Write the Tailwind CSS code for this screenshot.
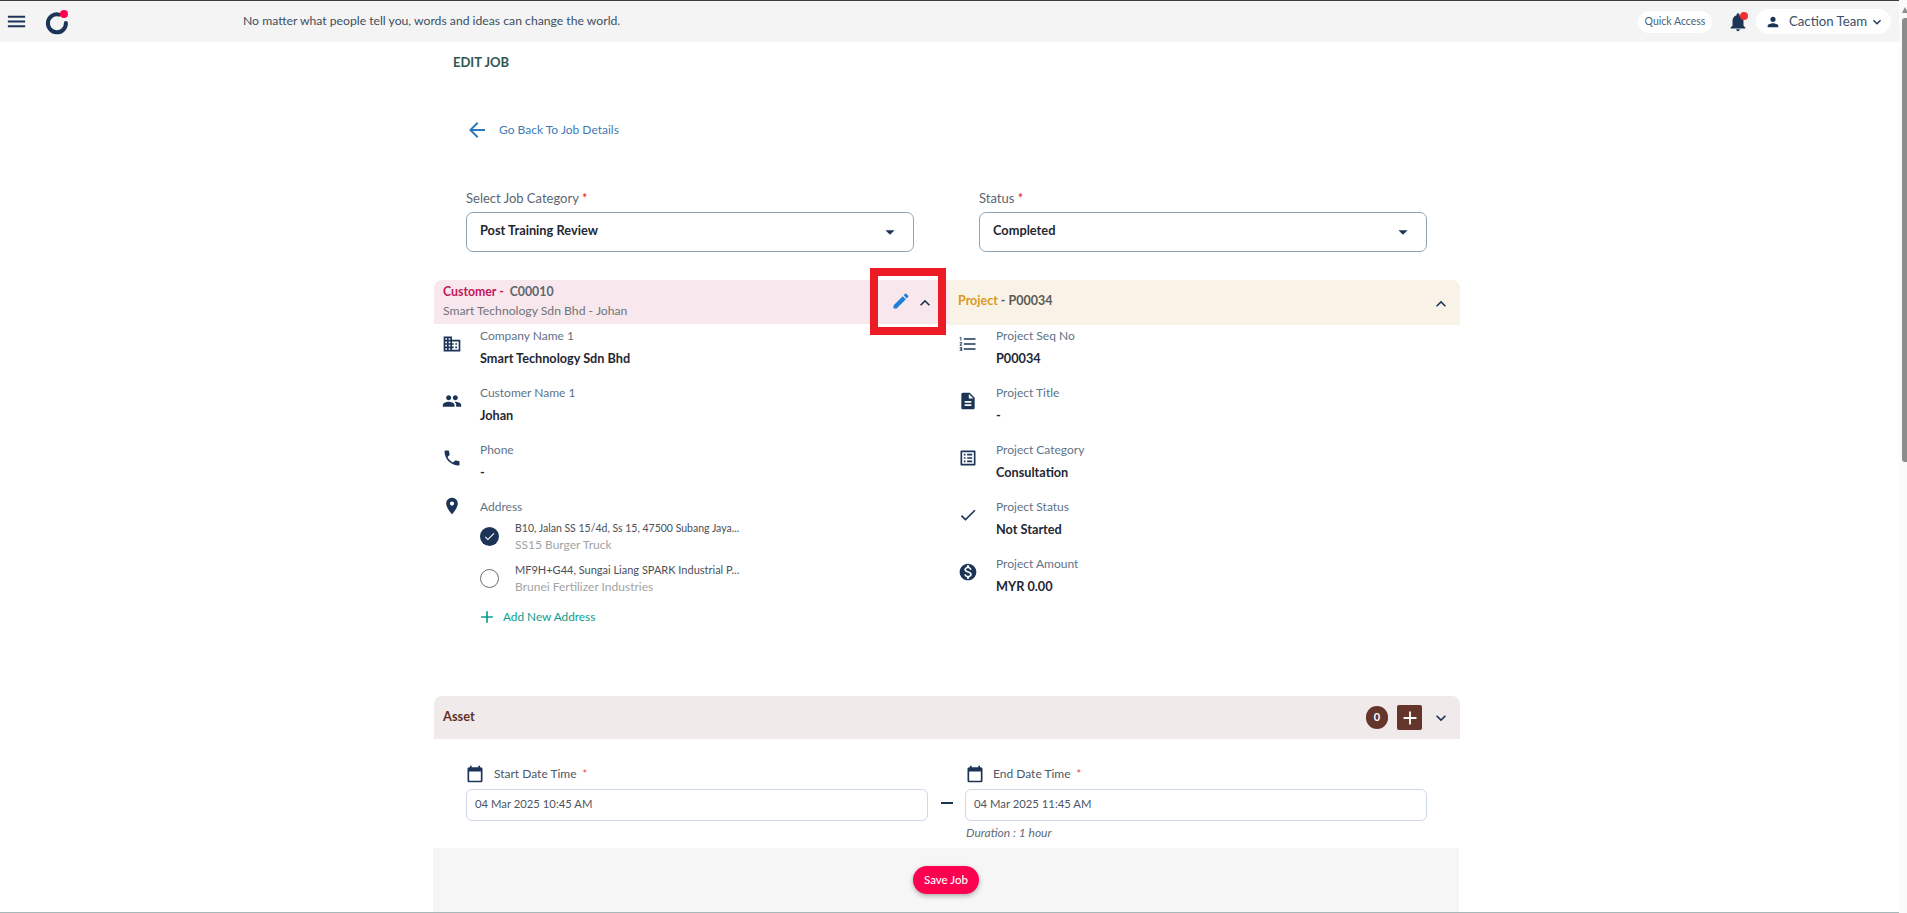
<!DOCTYPE html>
<html>
<head>
<meta charset="utf-8">
<script src="https://cdn.jsdelivr.net/npm/@tailwindcss/browser@4"></script>
</head>
<body class="m-0 bg-white font-['Lato',sans-serif] overflow-hidden">
<div class="relative flex h-[913px] w-[1907px] overflow-hidden">
  <div class="flex h-full w-[1899px] flex-col">
    <!-- top bar -->
    <header class="flex h-[42px] shrink-0 items-center border-t border-t-[#3f3a3c] bg-[#f4f4f4]">
      <svg class="ml-[5px] h-[23px] w-[23px] fill-[#1c3557]" viewBox="0 0 24 24"><path d="M3 18h18v-2H3v2zm0-5h18v-2H3v2zm0-7v2h18V6H3z"/></svg>
      <svg class="ml-[16px] h-[26px] w-[26px]" viewBox="0 0 26 26"><path d="M15 5.6A9 9 0 1 0 21.9 14" fill="none" stroke="#1c3557" stroke-width="4" stroke-linecap="round"/><circle cx="20" cy="5" r="4" fill="#ff0050"/></svg>
      <p class="ml-[173px] text-[12.2px] text-[#3d4f60]">No matter what people tell you, words and ideas can change the world.</p>
      <div class="ml-auto flex items-center">
        <span class="flex h-[22px] w-[74px] items-center justify-center rounded-full bg-white text-[10.5px] text-[#4a6178]">Quick Access</span>
        <span class="relative ml-[15px] block h-[22px] w-[22px]">
          <svg class="h-[22px] w-[22px] fill-[#1c3557]" viewBox="0 0 24 24"><path d="M12 22c1.1 0 2-.9 2-2h-4c0 1.1.89 2 2 2zm6-6v-5c0-3.07-1.64-5.64-4.5-6.32V4c0-.83-.67-1.5-1.5-1.5s-1.5.67-1.5 1.5v.68C7.63 5.36 6 7.92 6 11v5l-2 2v1h16v-1l-2-2z"/></svg>
          <span class="absolute right-[1px] top-[1px] h-[8px] w-[8px] rounded-full bg-[#f03030]"></span>
        </span>
        <div class="ml-[7px] mr-[8px] flex h-[25px] w-[135px] items-center rounded-full bg-white">
          <svg class="ml-[9px] h-[16px] w-[16px] fill-[#1c3557]" viewBox="0 0 24 24"><path d="M12 12c2.21 0 4-1.79 4-4s-1.79-4-4-4-4 1.79-4 4 1.79 4 4 4zm0 2c-2.67 0-8 1.34-8 4v2h16v-2c0-2.66-5.33-4-8-4z"/></svg>
          <span class="ml-[8px] w-[74px] whitespace-nowrap text-[13.2px] text-[#3d5166]">Caction Team</span>
          <svg class="ml-[6px] h-[16px] w-[16px] fill-[#1c3557]" viewBox="0 0 24 24"><path d="M16.59 8.59L12 13.17 7.41 8.59 6 10l6 6 6-6z"/></svg>
        </div>
      </div>
    </header>

    <main class="ml-[434px] flex w-[1027px] flex-1 flex-col">
      <h1 class="flex h-[42px] items-center pl-[19px] text-[13px] font-bold text-[#2f574f]">EDIT JOB</h1>
      <div class="mt-[30px] flex h-[32px] items-center pl-[31px]">
        <svg class="h-[24px] w-[24px] fill-[#2f78b7]" viewBox="0 0 24 24"><path d="M20 11H7.83l5.59-5.59L12 4l-8 8 8 8 1.41-1.41L7.83 13H20v-2z"/></svg>
        <span class="ml-[10px] text-[12px] text-[#3f7cb5]">Go Back To Job Details</span>
      </div>

      <div class="mt-[40px] grid grid-cols-[448px_448px] gap-x-[65px] pl-[32px]">
        <div>
          <label class="flex h-[24px] items-center pt-[2px] text-[13px] text-[#5a6672]">Select Job Category&nbsp;<span class="text-[#e01b24]">*</span></label>
          <div class="mt-[2px] flex h-[40px] items-center justify-between rounded-[7px] border border-[#8ba3b8] pb-[2px] pl-[13px] pr-[12px]">
            <span class="text-[12.8px] font-bold text-[#1f2733]">Post Training Review</span>
            <svg class="mt-[2px] h-[22px] w-[22px] fill-[#1c3557]" viewBox="0 0 24 24"><path d="M7 10l5 5 5-5z"/></svg>
          </div>
        </div>
        <div>
          <label class="flex h-[24px] items-center pt-[2px] text-[13px] text-[#5a6672]">Status&nbsp;<span class="text-[#e01b24]">*</span></label>
          <div class="mt-[2px] flex h-[40px] items-center justify-between rounded-[7px] border border-[#8ba3b8] pb-[2px] pl-[13px] pr-[12px]">
            <span class="text-[12.8px] font-bold text-[#1f2733]">Completed</span>
            <svg class="mt-[2px] h-[22px] w-[22px] fill-[#1c3557]" viewBox="0 0 24 24"><path d="M7 10l5 5 5-5z"/></svg>
          </div>
        </div>
      </div>

      <div class="mt-[28px] grid h-[416px] grid-cols-[515px_511px]">
        <!-- customer -->
        <section>
          <div class="flex h-[44px] items-center rounded-tl-[8px] bg-[#f8e8ed] pl-[9px] pr-[14px]">
            <div class="flex-1 pb-[4px]">
              <p class="h-[22px] text-[12.3px] font-bold leading-[24px] text-[#5d6670]"><span class="text-[#c2185b]">Customer -</span>&nbsp; C00010</p>
              <p class="h-[18px] text-[12.2px] leading-[18px] text-[#6f7479]">Smart Technology Sdn Bhd - Johan</p>
            </div>
            <svg class="-mt-[2px] h-[20px] w-[20px] fill-[#1e7fd6]" viewBox="0 0 24 24"><path d="M3 17.25V21h3.75L17.81 9.94l-3.75-3.75L3 17.25zM20.71 7.04c.39-.39.39-1.02 0-1.41l-2.34-2.34c-.39-.39-1.02-.39-1.41 0l-1.83 1.83 3.75 3.75 1.83-1.83z"/></svg>
            <svg class="ml-[4px] mt-[2px] h-[20px] w-[20px] fill-[#1c3557]" viewBox="0 0 24 24"><path d="M12 8l-6 6 1.41 1.41L12 10.83l4.59 4.58L18 14z"/></svg>
          </div>
          <div class="pt-[1px]">
            <div class="flex h-[57px]">
              <div class="flex w-[46px] justify-center pt-[9px]"><svg class="ml-[-10px] h-[20px] w-[20px] fill-[#1c3557]" viewBox="0 0 24 24"><path d="M12 7V3H2v18h20V7H12zM6 19H4v-2h2v2zm0-4H4v-2h2v2zm0-4H4V9h2v2zm0-4H4V5h2v2zm4 12H8v-2h2v2zm0-4H8v-2h2v2zm0-4H8V9h2v2zm0-4H8V5h2v2zm10 12h-8v-2h2v-2h-2v-2h2v-2h-2V9h8v10zm-2-8h-2v2h2v-2zm0 4h-2v2h2v-2z"/></svg></div>
              <div><p class="h-[22px] text-[12px] leading-[22px] text-[#5f7285]">Company Name 1</p><p class="h-[22px] text-[12.7px] font-bold leading-[22px] text-[#1f2733]">Smart Technology Sdn Bhd</p></div>
            </div>
            <div class="flex h-[57px]">
              <div class="flex w-[46px] justify-center pt-[9px]"><svg class="ml-[-10px] h-[20px] w-[20px] fill-[#1c3557]" viewBox="0 0 24 24"><path d="M16 11c1.66 0 2.99-1.34 2.99-3S17.66 5 16 5c-1.66 0-3 1.34-3 3s1.34 3 3 3zm-8 0c1.66 0 2.99-1.34 2.99-3S9.66 5 8 5C6.34 5 5 6.34 5 8s1.34 3 3 3zm0 2c-2.33 0-7 1.17-7 3.5V19h14v-2.5c0-2.33-4.67-3.5-7-3.5zm8 0c-.29 0-.62.02-.97.05 1.16.84 1.97 1.97 1.97 3.45V19h6v-2.5c0-2.33-4.67-3.5-7-3.5z"/></svg></div>
              <div><p class="h-[22px] text-[12px] leading-[22px] text-[#5f7285]">Customer Name 1</p><p class="h-[22px] text-[12.7px] font-bold leading-[22px] text-[#1f2733]">Johan</p></div>
            </div>
            <div class="flex h-[57px]">
              <div class="flex w-[46px] justify-center pt-[9px]"><svg class="ml-[-10px] h-[20px] w-[20px] fill-[#1c3557]" viewBox="0 0 24 24"><path d="M6.62 10.79c1.44 2.83 3.76 5.14 6.59 6.59l2.2-2.2c.27-.27.67-.36 1.02-.24 1.12.37 2.33.57 3.57.57.55 0 1 .45 1 1V20c0 .55-.45 1-1 1-9.39 0-17-7.61-17-17 0-.55.45-1 1-1h3.5c.55 0 1 .45 1 1 0 1.25.2 2.45.57 3.57.11.35.03.74-.25 1.02l-2.2 2.2z"/></svg></div>
              <div><p class="h-[22px] text-[12px] leading-[22px] text-[#5f7285]">Phone</p><p class="h-[22px] text-[12.7px] font-bold leading-[22px] text-[#1f2733]">-</p></div>
            </div>
            <div class="flex">
              <div class="flex w-[46px] justify-center pt-[0px]"><svg class="ml-[-10px] h-[20px] w-[20px] fill-[#1c3557]" viewBox="0 0 24 24"><path d="M12 2C8.13 2 5 5.13 5 9c0 5.25 7 13 7 13s7-7.75 7-13c0-3.87-3.13-7-7-7zm0 9.5c-1.38 0-2.5-1.12-2.5-2.5s1.12-2.5 2.5-2.5 2.5 1.12 2.5 2.5-1.12 2.5-2.5 2.5z"/></svg></div>
              <div>
                <p class="h-[22px] text-[12px] leading-[22px] text-[#5f7285]">Address</p>
                <div class="-mt-[3px] flex h-[42px] items-center">
                  <span class="flex h-[19px] w-[19px] items-center justify-center rounded-full bg-[#1c3557]"><svg class="h-[13px] w-[13px] fill-white" viewBox="0 0 24 24"><path d="M9 16.17L4.83 12l-1.42 1.41L9 19 21 7l-1.41-1.41z"/></svg></span>
                  <div class="ml-[16px]"><p class="whitespace-nowrap text-[10.5px] leading-[16px] text-[#4b4f58]">B10, Jalan SS 15/4d, Ss 15, 47500 Subang Jaya...</p><p class="text-[12px] leading-[17px] text-[#a3a3a3]">SS15 Burger Truck</p></div>
                </div>
                <div class="flex h-[42px] items-center">
                  <span class="block h-[19px] w-[19px] rounded-full border border-[#6f6f6f]"></span>
                  <div class="ml-[16px]"><p class="whitespace-nowrap text-[11px] leading-[16px] text-[#4b4f58]">MF9H+G44, Sungai Liang SPARK Industrial P...</p><p class="text-[12px] leading-[17px] text-[#a3a3a3]">Brunei Fertilizer Industries</p></div>
                </div>
                <div class="mt-[6px] flex h-[24px] items-center">
                  <svg class="ml-[-3px] h-[20px] w-[20px] fill-[#0d9d8f]" viewBox="0 0 24 24"><path d="M19 13h-6v6h-2v-6H5v-2h6V5h2v6h6v2z"/></svg>
                  <span class="ml-[6px] text-[11.8px] text-[#0d9d8f]">Add New Address</span>
                </div>
              </div>
            </div>
          </div>
        </section>
        <!-- project -->
        <section>
          <div class="flex h-[45px] items-center rounded-tr-[8px] bg-[#f9f2e7] pl-[9px] pr-[9px]">
            <p class="flex-1 pb-[2px] text-[12.5px] font-bold text-[#5d5a55]"><span class="text-[#d99a1c]">Project</span> - P00034</p>
            <svg class="mt-[2px] h-[20px] w-[20px] fill-[#1c3557]" viewBox="0 0 24 24"><path d="M12 8l-6 6 1.41 1.41L12 10.83l4.59 4.58L18 14z"/></svg>
          </div>
          <div class="flex h-[57px]">
            <div class="flex w-[47px] justify-center pt-[9px]"><svg class="ml-[-10px] h-[20px] w-[20px] fill-[#1c3557]" viewBox="0 0 24 24"><path d="M2 17h2v.5H3v1h1v.5H2v1h3v-4H2v1zm1-9h1V4H2v1h1v3zm-1 3h1.8L2 13.1v.9h3v-1H3.2L5 10.9V10H2v1zm5-6v2h14V5H7zm0 14h14v-2H7v2zm0-6h14v-2H7v2z"/></svg></div>
            <div><p class="h-[22px] text-[12px] leading-[22px] text-[#5f7285]">Project Seq No</p><p class="h-[22px] text-[12.7px] font-bold leading-[22px] text-[#1f2733]">P00034</p></div>
          </div>
          <div class="flex h-[57px]">
            <div class="flex w-[47px] justify-center pt-[9px]"><svg class="ml-[-10px] h-[20px] w-[20px] fill-[#1c3557]" viewBox="0 0 24 24"><path d="M14 2H6c-1.1 0-1.99.9-1.99 2L4 20c0 1.1.89 2 1.99 2H18c1.1 0 2-.9 2-2V8l-6-6zm2 16H8v-2h8v2zm0-4H8v-2h8v2zm-3-5V3.5L18.5 9H13z"/></svg></div>
            <div><p class="h-[22px] text-[12px] leading-[22px] text-[#5f7285]">Project Title</p><p class="h-[22px] text-[12.7px] font-bold leading-[22px] text-[#1f2733]">-</p></div>
          </div>
          <div class="flex h-[57px]">
            <div class="flex w-[47px] justify-center pt-[9px]"><svg class="ml-[-10px] h-[20px] w-[20px] fill-[#1c3557]" viewBox="0 0 24 24"><path d="M19 5v14H5V5h14m1.1-2H3.9c-.5 0-.9.4-.9.9v16.2c0 .4.4.9.9.9h16.2c.4 0 .9-.5.9-.9V3.9c0-.5-.5-.9-.9-.9zM11 7h6v2h-6V7zm0 4h6v2h-6v-2zm0 4h6v2h-6zM7 7h2v2H7zm0 4h2v2H7zm0 4h2v2H7z"/></svg></div>
            <div><p class="h-[22px] text-[12px] leading-[22px] text-[#5f7285]">Project Category</p><p class="h-[22px] text-[12.7px] font-bold leading-[22px] text-[#1f2733]">Consultation</p></div>
          </div>
          <div class="flex h-[57px]">
            <div class="flex w-[47px] justify-center pt-[9px]"><svg class="ml-[-10px] h-[20px] w-[20px] fill-[#1c3557]" viewBox="0 0 24 24"><path d="M9 16.17L4.83 12l-1.42 1.41L9 19 21 7l-1.41-1.41z"/></svg></div>
            <div><p class="h-[22px] text-[12px] leading-[22px] text-[#5f7285]">Project Status</p><p class="h-[22px] text-[12.7px] font-bold leading-[22px] text-[#1f2733]">Not Started</p></div>
          </div>
          <div class="flex h-[57px]">
            <div class="flex w-[47px] justify-center pt-[9px]"><svg class="ml-[-10px] h-[20px] w-[20px] fill-[#1c3557]" viewBox="0 0 24 24"><path d="M12 2C6.48 2 2 6.48 2 12s4.48 10 10 10 10-4.48 10-10S17.52 2 12 2zm1.41 16.09V20h-2.67v-1.93c-1.71-.36-3.16-1.46-3.27-3.4h1.96c.1 1.05.82 1.87 2.65 1.87 1.96 0 2.4-.98 2.4-1.59 0-.83-.44-1.61-2.67-2.14-2.48-.6-4.18-1.62-4.18-3.67 0-1.72 1.39-2.84 3.11-3.21V4h2.67v1.95c1.86.45 2.79 1.86 2.85 3.39H14.3c-.05-1.11-.64-1.87-2.22-1.87-1.5 0-2.4.68-2.4 1.64 0 .84.65 1.39 2.67 1.91s4.18 1.39 4.18 3.91c-.01 1.83-1.38 2.83-3.12 3.16z"/></svg></div>
            <div><p class="h-[22px] text-[12px] leading-[22px] text-[#5f7285]">Project Amount</p><p class="h-[22px] text-[12.7px] font-bold leading-[22px] text-[#1f2733]">MYR 0.00</p></div>
          </div>
        </section>
      </div>

      <!-- asset -->
      <div class="flex h-[43px] w-[1026px] items-center rounded-t-[8px] bg-[#f0eaea] pl-[9px] pr-[9px]">
        <span class="flex-1 pb-[2px] text-[12.8px] font-bold text-[#5e3028]">Asset</span>
        <span class="flex h-[23px] w-[22px] items-center justify-center rounded-full bg-[#63352b] text-[11px] font-bold text-white">0</span>
        <span class="ml-[9px] flex h-[25px] w-[25px] items-center justify-center rounded-[2px] bg-[#63352b]"><svg class="h-[22px] w-[22px] fill-white" viewBox="0 0 24 24"><path d="M19 13h-6v6h-2v-6H5v-2h6V5h2v6h6v2z"/></svg></span>
        <svg class="ml-[9px] h-[20px] w-[20px] fill-[#1c3557]" viewBox="0 0 24 24"><path d="M16.59 8.59L12 13.17 7.41 8.59 6 10l6 6 6-6z"/></svg>
      </div>

      <div class="grid h-[109px] grid-cols-[462px_37px_462px] pl-[32px] pt-[23px]">
        <div>
          <div class="flex h-[24px] items-center">
            <svg class="-ml-[1px] h-[20px] w-[20px] fill-[#1c3557]" viewBox="0 0 24 24"><path d="M19 4h-1V2h-2v2H8V2H6v2H5c-1.11 0-2 .9-2 2v14c0 1.1.89 2 2 2h14c1.1 0 2-.9 2-2V6c0-1.1-.9-2-2-2zm0 16H5V9h14v11z"/></svg>
            <span class="ml-[9px] text-[12px] text-[#4c5966]">Start Date Time</span>
            <span class="ml-[6px] text-[11px] text-[#f04040]">*</span>
          </div>
          <div class="mt-[3px] flex h-[32px] items-center rounded-[6px] border border-[#cfd8e6] pb-[1px] pl-[8px] text-[11.3px] text-[#4b5563]">04 Mar 2025 10:45 AM</div>
        </div>
        <div class="flex justify-center pt-[31px]"><span class="mt-[9px] block h-[2px] w-[12px] bg-[#1c3557]"></span></div>
        <div>
          <div class="flex h-[24px] items-center">
            <svg class="h-[20px] w-[20px] fill-[#1c3557]" viewBox="0 0 24 24"><path d="M19 4h-1V2h-2v2H8V2H6v2H5c-1.11 0-2 .9-2 2v14c0 1.1.89 2 2 2h14c1.1 0 2-.9 2-2V6c0-1.1-.9-2-2-2zm0 16H5V9h14v11z"/></svg>
            <span class="ml-[8px] text-[12px] text-[#4c5966]">End Date Time</span>
            <span class="ml-[6px] text-[11px] text-[#f04040]">*</span>
          </div>
          <div class="mt-[3px] flex h-[32px] items-center rounded-[6px] border border-[#cfd8e6] pb-[1px] pl-[8px] text-[11.3px] text-[#4b5563]">04 Mar 2025 11:45 AM</div>
          <p class="mt-[3px] pl-[1px] text-[12px] italic text-[#5f6b76]">Duration : 1 hour</p>
        </div>
      </div>

      <div class="-ml-px flex h-[64px] w-[1026px] justify-center bg-[#f6f6f6] pt-[18px]">
        <button class="h-[28px] w-[66px] rounded-full bg-[#ff0050] text-[11.5px] font-medium text-white shadow-[0_2px_5px_rgba(0,0,0,0.3)]">Save Job</button>
      </div>
    </main>
    <div class="h-px shrink-0 bg-[#a6b8b8]"></div>
  </div>
  <!-- scrollbar -->
  <div class="flex h-full w-[8px] flex-col bg-[#fafafa] pl-[3px]">
    <span class="mt-[7px] block h-0 w-0 border-x-[3px] border-b-[6px] border-x-transparent border-b-[#8c8c8c]"></span>
    <span class="mt-[5px] block h-[444px] w-[5px] rounded-l-[3px] bg-[#8c8c8c]"></span>
  </div>
  <!-- annotation -->
  <div class="absolute left-[870px] top-[268px] h-[67px] w-[76px] border-[8px] border-[#ed1c24]"></div>
</div>
</body>
</html>
